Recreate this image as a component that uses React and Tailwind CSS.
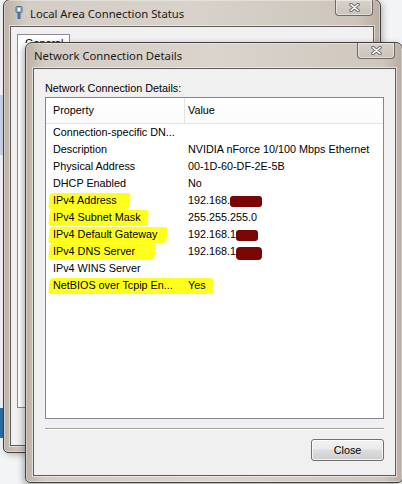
const rows = [
  { p: "Connection-specific DN...", v: "" },
  { p: "Description", v: "NVIDIA nForce 10/100 Mbps Ethernet" },
  { p: "Physical Address", v: "00-1D-60-DF-2E-5B" },
  { p: "DHCP Enabled", v: "No" },
  { p: "IPv4 Address", v: "192.168.", hl: 81, red: 32 },
  { p: "IPv4 Subnet Mask", v: "255.255.255.0", hl: 99 },
  { p: "IPv4 Default Gateway", v: "192.168.1", hl: 118, red: 22 },
  { p: "IPv4 DNS Server", v: "192.168.1", hl: 106, red: 26, big: true },
  { p: "IPv4 WINS Server", v: "" },
  { p: "NetBIOS over Tcpip En...", v: "Yes", hl: 160, wide: true },
];

function CloseGlyph() {
  return (
    <svg width="11" height="9" viewBox="0 0 11 9">
      <path d="M2 1.5 L9 7.5 M9 1.5 L2 7.5" stroke="#6e6e6e" strokeWidth="3.6" strokeLinecap="round" />
      <path d="M2 1.5 L9 7.5 M9 1.5 L2 7.5" stroke="#ffffff" strokeWidth="1.6" strokeLinecap="round" />
    </svg>
  );
}

function TitleClose() {
  return (
    <div className="absolute top-0 right-[7px] w-[38px] h-[16px] rounded-b-[4px] border border-t-0 border-[#6f6a66] bg-[linear-gradient(to_bottom,#d7d1ca,#cbc3ba)] shadow-[inset_0_0_0_1px_rgba(255,255,255,0.45)] flex items-center justify-center">
      <CloseGlyph />
    </div>
  );
}

function NetIcon() {
  return (
    <svg width="8" height="14" viewBox="0 0 8 14">
      <rect x="1" y="0.5" width="6" height="6" rx="1" fill="#9fb9d6" stroke="#4d6f96" />
      <rect x="2.5" y="7" width="3" height="6" fill="#3d74b8" />
      <rect x="3" y="2" width="2" height="3" fill="#ffffff" />
    </svg>
  );
}

export default function App() {
  return (
    <div
      className="relative w-[402px] h-[484px] overflow-hidden bg-[#f3f4f5]"
      style={{ fontFamily: '"Liberation Sans", Arial, sans-serif' }}
    >
      {/* desktop fragments behind */}
      <div className="absolute left-0 top-[95px] w-[4px] h-[60px] bg-[#c9d6e6]" />
      <div className="absolute left-0 top-[408px] w-[12px] h-[30px] bg-[#2f6ca3]" />
      <div className="absolute right-0 top-[408px] w-[8px] h-[32px] bg-[#2f6ca3]" />

      {/* Back window */}
      <div className="absolute left-[3px] top-[-1px] w-[378px] h-[454px] rounded-t-[7px] rounded-b-[5px] border border-[#45403c] bg-[linear-gradient(to_right,#bdb2a6,#d4cdc5_6%,#d8d2cb_50%,#cdc5bb_94%,#b9aea2)] shadow-[2px_2px_6px_rgba(0,0,0,0.25),inset_0_0_0_1px_rgba(255,255,255,0.35)] flex flex-col">
        <div className="relative h-[26px] shrink-0 flex items-center pl-[11px] gap-[7px]">
          <NetIcon />
          <span
            className="text-[11.3px] text-[#1a1a1a] leading-none pt-[1px]"
            style={{ fontFamily: '"Noto Sans", "Open Sans", sans-serif' }}
          >
            Local Area Connection Status
          </span>
          <TitleClose />
        </div>
        <div className="flex-1 mx-[6px] mb-[6px] border border-[#5e5b58] bg-[#f0f0f0] shadow-[0_0_0_1px_rgba(255,255,255,0.5)] flex flex-col pl-[6px] pr-[6px] pt-[7px]">
          <div className="flex">
            <div className="w-[53px] h-[9px] border border-b-0 border-[#898c95] bg-white text-[10.8px] leading-[13px] pl-[7px] pt-[2px] overflow-hidden text-black">
              General
            </div>
            <div className="flex-1 border-b border-[#898c95]" />
          </div>
          <div className="h-[365px] border border-t-0 border-[#898c95] bg-white" />
        </div>
      </div>

      {/* Front window */}
      <div className="absolute left-[25px] top-[42px] w-[378px] h-[441px] rounded-t-[7px] rounded-b-[5px] border border-[#45403c] bg-[linear-gradient(to_right,#bcb1a5,#d3ccc4_5%,#dad4cd_50%,#cfc7bd_95%,#b8ada1)] shadow-[-2px_2px_6px_rgba(0,0,0,0.3),inset_0_0_0_1px_rgba(255,255,255,0.35)] flex flex-col">
        <div className="relative h-[25px] shrink-0 flex items-center pl-[8px]">
          <span
            className="text-[11.3px] text-[#1a1a1a] leading-none pt-[1px]"
            style={{ fontFamily: '"Noto Sans", "Open Sans", sans-serif' }}
          >
            Network Connection Details
          </span>
          <TitleClose />
        </div>
        <div className="flex-1 ml-[7px] mr-[6px] mb-[6px] border border-[#5e5b58] bg-[#f0f0f0] shadow-[0_0_0_1px_rgba(255,255,255,0.5)] flex flex-col px-[11px] text-[10.8px] text-black">
          <div className="mt-[12px] leading-[14px]">Network Connection Details:</div>
          <div className="mt-[2px] h-[322px] border border-[#828790] bg-white flex flex-col">
            <div className="flex h-[26px] border-b border-[#e3e3e3] bg-[linear-gradient(to_bottom,#ffffff,#fbfbfb)]">
              <div className="w-[139px] border-r border-[#e3e3e3] pl-[7px] flex items-center">Property</div>
              <div className="pl-[3px] flex items-center">Value</div>
            </div>
            {rows.map((r, i) => (
              <div key={i} className="flex h-[17px] items-center">
                <div className="relative w-[139px] pl-[7px] h-full flex items-center">
                  {r.hl ? (
                    <span
                      className="absolute left-[3px] top-[1px] h-[16px] bg-[#ffff1e] rounded-[3px] -skew-x-6"
                      style={{ width: r.hl }}
                    />
                  ) : null}
                  <span className="relative whitespace-nowrap">{r.p}</span>
                </div>
                <div className="relative pl-[3px] h-full flex items-center whitespace-nowrap">
                  {r.wide ? (
                    <span className="absolute left-[-10px] top-[1px] h-[16px] w-[38px] bg-[#ffff1e] rounded-[3px]" />
                  ) : null}
                  <span className="relative">{r.v}</span>
                  {r.red ? (
                    <span
                      className={
                        r.big
                          ? "relative inline-block h-[13px] mt-[3px] bg-[#7a0505] rounded-[4px]"
                          : "relative inline-block h-[11px] mt-[1px] bg-[#7a0505] rounded-[3px]"
                      }
                      style={{ width: r.red }}
                    />
                  ) : null}
                </div>
              </div>
            ))}
          </div>
          <div className="mt-[9px] h-[2px] border-t border-[#a0a0a0] border-b border-b-white" />
          <div className="mt-[9px] self-end w-[73px] h-[22px] rounded-[3px] border border-[#707070] bg-[linear-gradient(to_bottom,#f2f2f2_0%,#ebebeb_45%,#dddddd_50%,#cfcfcf_100%)] shadow-[inset_0_0_0_1px_rgba(255,255,255,0.7)] flex items-center justify-center">
            Close
          </div>
        </div>
      </div>
    </div>
  );
}
